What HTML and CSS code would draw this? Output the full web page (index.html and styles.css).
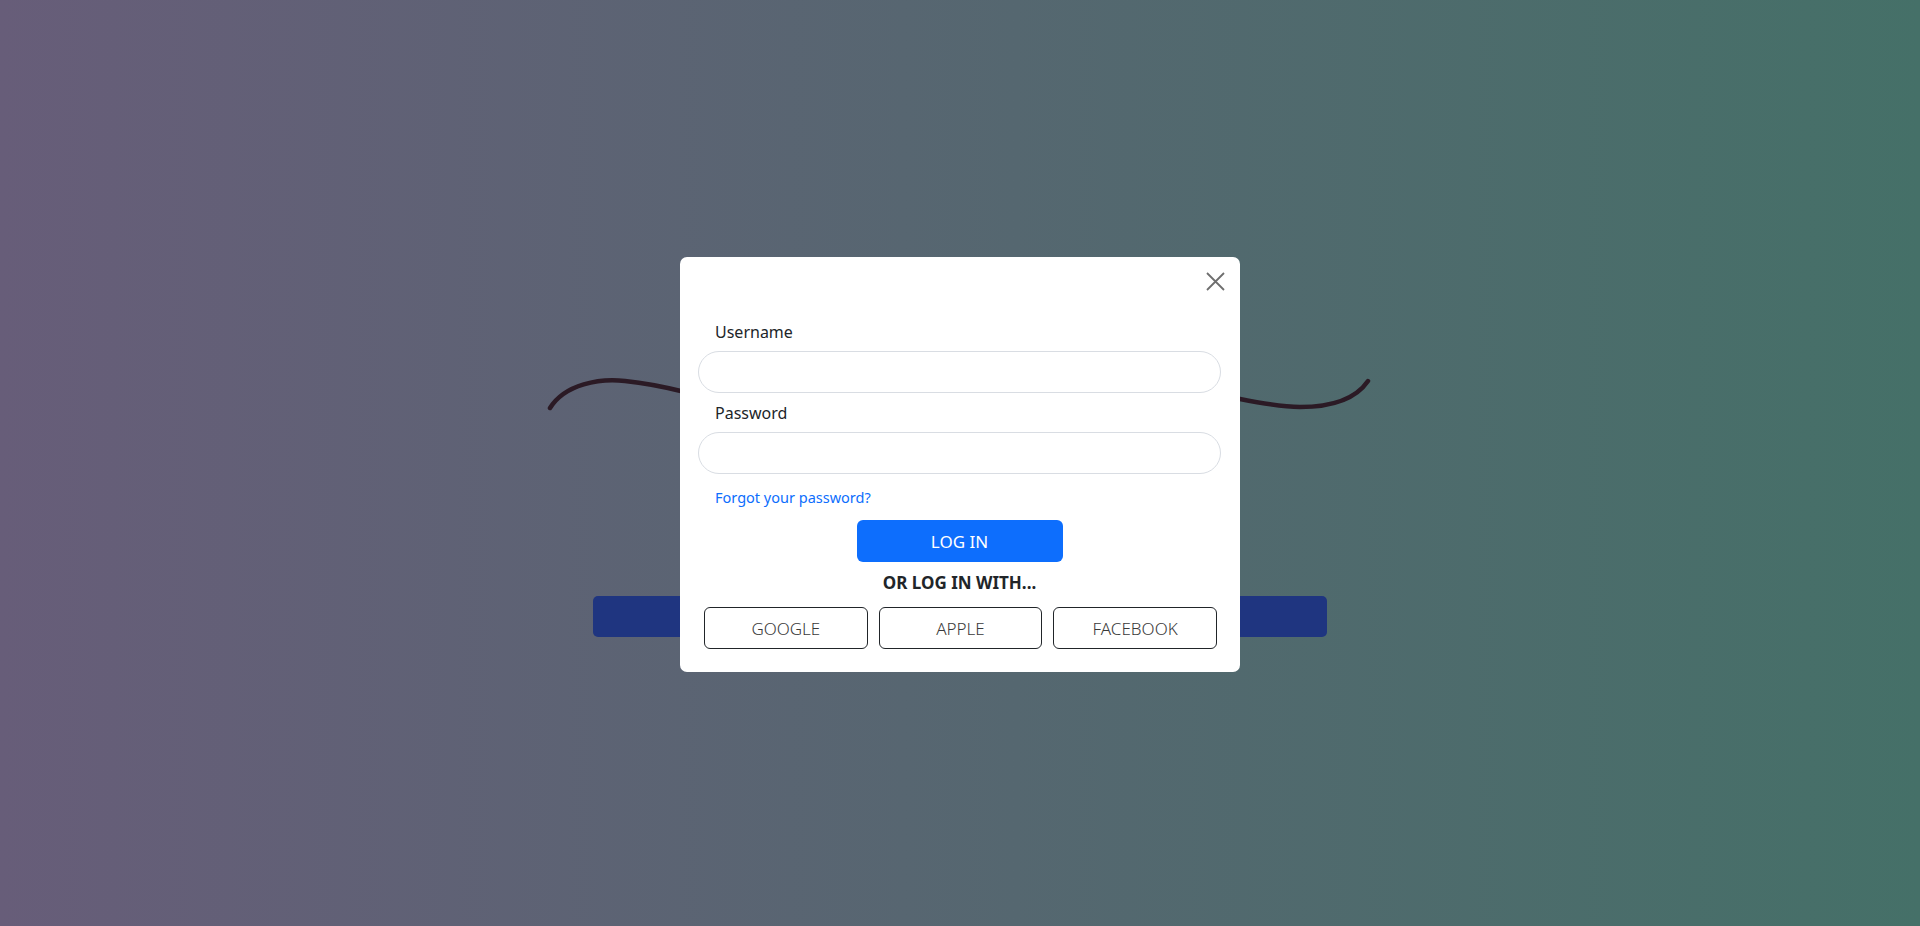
FILE: index.html
```html
<!DOCTYPE html>
<html lang="en">
<head>
<meta charset="utf-8">
<title>Log in</title>
<link rel="stylesheet" href="styles.css">
</head>
<body>
<main class="page">
  <svg class="squiggle" width="830" height="50" viewBox="0 0 830 50" aria-hidden="true">
    <path d="M5 38 C20 14, 55 8, 80 11 C100 13, 120 17, 140 22 C300 60, 500 10, 695 29 C720 34, 740 37, 755 37 C785 37, 810 30, 823 11" fill="none" stroke="#2b1a25" stroke-width="4.5" stroke-linecap="round"/>
  </svg>
  <div class="hero-bar"></div>
</main>

<div class="modal-layer">
  <div class="modal" role="dialog" aria-label="Log in">
    <div class="modal-header">
      <button class="btn-close" type="button" aria-label="Close">
        <svg width="19" height="19" viewBox="0 0 19 19"><path d="M1 1 L18 18 M18 1 L1 18" stroke="#6e6e6e" stroke-width="1.8" fill="none"/></svg>
      </button>
    </div>
    <form class="modal-body">
      <label class="form-label" for="username">Username</label>
      <input class="form-input" id="username" type="text">
      <label class="form-label second" for="password">Password</label>
      <input class="form-input" id="password" type="password">
      <a class="forgot" href="#">Forgot your password?</a>
      <button class="login-btn" type="button">LOG IN</button>
      <div class="or-text">OR LOG IN WITH...</div>
      <div class="social">
        <button class="social-btn" type="button">GOOGLE</button>
        <button class="social-btn" type="button">APPLE</button>
        <button class="social-btn" type="button">FACEBOOK</button>
      </div>
    </form>
  </div>
</div>
</body>
</html>
```

FILE: styles.css
```css
* { box-sizing: border-box; }

html, body {
  margin: 0;
  height: 100%;
}

body {
  background: linear-gradient(to right, #675d79, #457068);
  font-family: "Noto Sans", "Open Sans", sans-serif;
  color: #212529;
  overflow: hidden;
}

.page {
  display: flex;
  flex-direction: column;
  align-items: center;
  padding-top: 370px;
}

.squiggle {
  display: block;
}

.hero-bar {
  width: 734px;
  height: 41px;
  margin-top: 176px;
  background: #1f3580;
  border-radius: 5px;
}

.modal-layer {
  position: fixed;
  inset: 0;
  display: flex;
  justify-content: center;
  align-items: flex-start;
  padding-top: 257px;
}

.modal {
  width: 560px;
  background: #fff;
  border-radius: 7px;
  padding: 0 19px 23px 18px;
}

.modal-header {
  display: flex;
  justify-content: flex-end;
  height: 63px;
  padding-top: 15px;
  margin-right: -4px;
}

.btn-close {
  width: 19px;
  height: 19px;
  padding: 0;
  border: 0;
  background: transparent;
  cursor: pointer;
}

.btn-close svg { display: block; }

.modal-body {
  display: flex;
  flex-direction: column;
}

.form-label {
  display: block;
  padding-left: 17px;
  font-size: 16px;
  line-height: 24px;
  margin-bottom: 7px;
  color: #212529;
}

.form-label.second { margin-top: 8px; }

.form-input {
  width: 100%;
  height: 42px;
  border: 1px solid #d9dde3;
  border-radius: 21px;
  padding: 0 16px;
  font: inherit;
  background: #fff;
}

.forgot {
  margin-top: 11px;
  padding-left: 17px;
  font-size: 14.5px;
  line-height: 24px;
  color: #0d6efd;
  text-decoration: none;
}

.login-btn {
  align-self: center;
  margin-top: 11px;
  width: 206px;
  height: 42px;
  border: 0;
  border-radius: 6px;
  background: #0d6efd;
  color: #fff;
  font-family: inherit;
  font-size: 17px;
}

.or-text {
  margin-top: 9px;
  text-align: center;
  font-size: 17px;
  font-weight: 700;
  line-height: 24px;
  color: #212529;
}

.social {
  margin-top: 12px;
  display: grid;
  grid-template-columns: repeat(3, 1fr);
  gap: 11px;
  padding: 0 4px 0 6px;
}

.social-btn {
  height: 42px;
  border: 1px solid #212529;
  border-radius: 6px;
  background: #fff;
  color: #3a3a3a;
  font-family: inherit;
  font-size: 17px;
  font-weight: 300;
}
```
